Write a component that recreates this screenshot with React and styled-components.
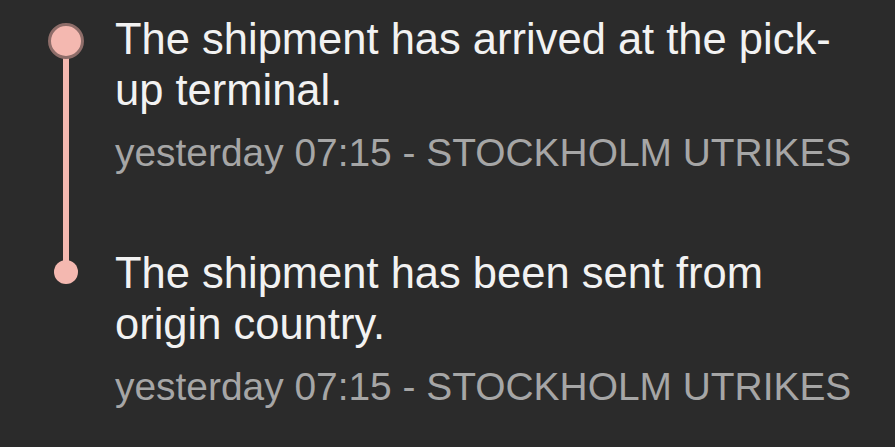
import React from "react";
import styled, { createGlobalStyle } from "styled-components";

const GlobalStyles = createGlobalStyle`
  html, body {
    margin: 0;
    padding: 0;
    background: #2b2b2b;
  }
  body {
    font-family: "Liberation Sans", Arial, Helvetica, sans-serif;
    -webkit-font-smoothing: antialiased;
  }
`;

const Timeline = styled.ul`
  list-style: none;
  margin: 0;
  padding: 14px 0 0 48px;
  width: 895px;
  height: 447px;
  box-sizing: border-box;
  display: flex;
  flex-direction: column;
  gap: 71px;
  overflow: hidden;
`;

const Event = styled.li`
  display: flex;
  align-items: stretch;
  gap: 31px;
`;

const Rail = styled.div`
  width: 36px;
  flex: none;
  display: flex;
  flex-direction: column;
  align-items: center;
`;

const Dot = styled.span`
  flex: none;
  box-sizing: content-box;
  border-radius: 50%;
  background: #f4b8b0;
  position: relative;
  z-index: 1;
  width: ${(p) => (p.$current ? "30px" : "24px")};
  height: ${(p) => (p.$current ? "30px" : "24px")};
  margin-top: ${(p) => (p.$current ? "9px" : "12px")};
  border: ${(p) => (p.$current ? "3px solid #8e6d69" : "none")};
`;

const Connector = styled.span`
  flex: 1;
  width: 6px;
  background: #f4b8b0;
  margin-top: -4px;
  margin-bottom: -86px;
`;

const Body = styled.div`
  width: 752px;
`;

const Title = styled.p`
  margin: 0;
  font-size: 43.5px;
  line-height: 51px;
  color: #f2f2f2;
`;

const Meta = styled.p`
  margin: 13px 0 0;
  font-size: 38.9px;
  line-height: 48px;
  color: #a6a6a6;
  white-space: nowrap;
`;

const events = [
  {
    title: "The shipment has arrived at the pick-up terminal.",
    meta: "yesterday 07:15 - STOCKHOLM UTRIKES",
  },
  {
    title: "The shipment has been sent from origin country.",
    meta: "yesterday 07:15 - STOCKHOLM UTRIKES",
  },
];

export default function App() {
  return (
    <>
      <GlobalStyles />
      <Timeline>
        {events.map((e, i) => (
          <Event key={i}>
            <Rail>
              <Dot $current={i === 0} />
              {i < events.length - 1 && <Connector />}
            </Rail>
            <Body>
              <Title>{e.title}</Title>
              <Meta>{e.meta}</Meta>
            </Body>
          </Event>
        ))}
      </Timeline>
    </>
  );
}
